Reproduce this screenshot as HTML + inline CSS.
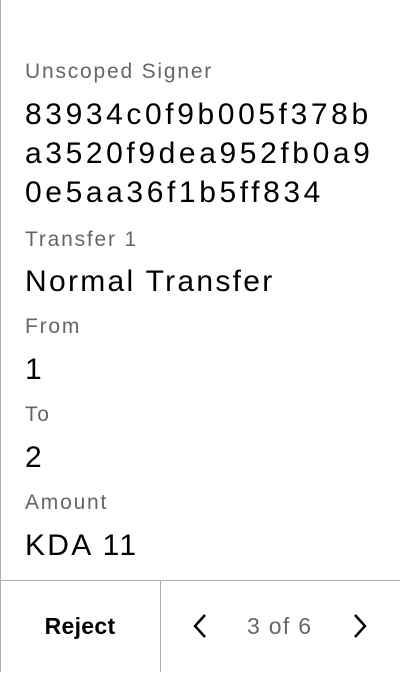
<!DOCTYPE html>
<html><head><style>
body{margin:0;width:400px;height:672px;background:#fff;font-family:"Liberation Sans",sans-serif;position:relative;overflow:hidden;border-left:1px solid #aaa;box-sizing:border-box}
.l{position:absolute;left:24px;color:#666;font-size:21px;letter-spacing:1.8px;line-height:24px}
.v{position:absolute;left:24px;color:#000;font-size:30px;letter-spacing:2.3px;line-height:30px}
.hex{letter-spacing:3.6px}
.foot{position:absolute;left:-1px;top:580px;width:401px;height:92px;border-top:1px solid #aaa}
.div{position:absolute;left:159px;top:580px;width:1px;height:92px;background:#aaa}
</style></head><body>
<div class="l" style="top:60px">Unscoped Signer</div>
<div class="v hex" style="top:100px">83934c0f9b005f378b</div>
<div class="v hex" style="top:139px">a3520f9dea952fb0a9</div>
<div class="v hex" style="top:178px">0e5aa36f1b5ff834</div>
<div class="l" style="top:228px">Transfer 1</div>
<div class="v" style="top:267px">Normal Transfer</div>
<div class="l" style="top:315px">From</div>
<div class="v" style="top:355px">1</div>
<div class="l" style="top:403px">To</div>
<div class="v" style="top:443px">2</div>
<div class="l" style="top:491px">Amount</div>
<div class="v" style="top:531px">KDA 11</div>
<div class="foot"></div><div class="div"></div>
<div style="position:absolute;left:-1px;width:160px;top:613px;text-align:center;font-size:23px;font-weight:bold;line-height:26px;letter-spacing:0.3px">Reject</div>
<svg style="position:absolute;left:189px;top:612px" width="20" height="28"><path d="M15 3 L5 14 L15 25" stroke="#000" stroke-width="2.5" fill="none"/></svg>
<div style="position:absolute;left:246px;top:613px;font-size:23px;color:#666;line-height:26px;letter-spacing:1.3px">3 of 6</div>
<svg style="position:absolute;left:349px;top:612px" width="20" height="28"><path d="M5 3 L15 14 L5 25" stroke="#000" stroke-width="2.5" fill="none"/></svg>
</body></html>
